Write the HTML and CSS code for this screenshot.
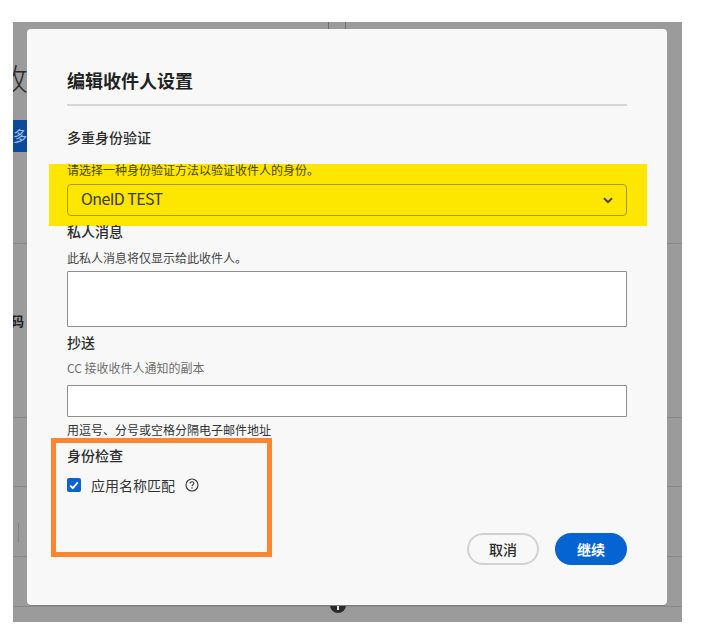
FILE: index.html
```html
<!DOCTYPE html>
<html lang="zh-CN">
<head>
  <meta charset="UTF-8">
  <title>编辑收件人设置</title>
  <link rel="stylesheet" href="styles.css">
</head>
<body>
  <div class="backdrop">
    <!-- Page behind the dialog, only its edges show -->
    <div class="behind">
      <div class="behind-row row-head">
        <div class="head-ticks"><i></i><i></i></div>
        <span class="behind-title">收</span>
        <span class="behind-btn">多</span>
      </div>
      <div class="behind-row row-code"><span class="behind-label">码</span></div>
      <div class="behind-row row-a"></div>
      <div class="behind-row row-b"><i class="behind-tick"></i></div>
      <div class="behind-row row-c"></div>
    </div>
    <span class="behind-plus"></span>

    <!-- Dialog -->
    <div class="dialog">
      <h1 class="dialog-title">编辑收件人设置</h1>

      <h2 class="label label-auth">多重身份验证</h2>
      <div class="highlight">
        <p class="hint">请选择一种身份验证方法以验证收件人的身份。</p>
        <div class="select">
          <span>OneID TEST</span>
          <svg width="10" height="7" viewBox="0 0 10 7"><path d="M1 1.2 5 5.2 9 1.2" fill="none" stroke="#4a4300" stroke-width="2"/></svg>
        </div>
      </div>

      <h2 class="label label-msg">私人消息</h2>
      <p class="hint hint-msg">此私人消息将仅显示给此收件人。</p>
      <div class="field field-tall"></div>

      <h2 class="label label-cc">抄送</h2>
      <p class="hint hint-grey">CC 接收收件人通知的副本</p>
      <div class="field"></div>
      <p class="hint hint-under">用逗号、分号或空格分隔电子邮件地址</p>

      <div class="bottom">
        <div class="callout">
          <h2 class="label">身份检查</h2>
          <div class="check-row">
            <span class="checkbox">
              <svg width="10" height="9" viewBox="0 0 10 9"><path d="M1.2 4.6 3.8 7.2 8.8 1.4" fill="none" stroke="#fff" stroke-width="1.9"/></svg>
            </span>
            <span class="check-text">应用名称匹配</span>
            <svg class="help" width="14" height="14" viewBox="0 0 14 14">
              <circle cx="7" cy="7" r="6" fill="none" stroke="#333" stroke-width="1.1"/>
              <path d="M5.1 5.5C5.1 4.4 6 3.8 7 3.8 8.1 3.8 8.9 4.5 8.9 5.4 8.9 6.6 7 6.8 7 8.3" fill="none" stroke="#333" stroke-width="1.1"/>
              <circle cx="7" cy="10.1" r=".75" fill="#333"/>
            </svg>
          </div>
        </div>
        <div class="actions">
          <button class="btn btn-cancel">取消</button>
          <button class="btn btn-go">继续</button>
        </div>
      </div>
    </div>
  </div>
</body>
</html>
```

FILE: styles.css
```css
* {
  margin: 0;
  padding: 0;
  box-sizing: border-box;
}

body {
  width: 712px;
  height: 639px;
  background: #fff;
  font-family: "Noto Sans CJK SC", "Noto Sans", sans-serif;
  color: #2c2c2c;
  overflow: hidden;
}

/* Dimmed page */
.backdrop {
  position: relative;
  width: 669px;
  height: 600px;
  margin: 22px 0 0 13px;
  background: #9b9b9b;
  overflow: hidden;
}

.behind-row {
  position: relative;
  border-bottom: 1px solid #8a8a8a;
}

.row-head { height: 222px; }
.row-code { height: 174px; }
.row-a { height: 69px; }
.row-b { height: 70px; }
.row-c { height: 50px; }

.head-ticks {
  display: flex;
  gap: 16px;
  padding-left: 315px;
  height: 7px;
}

.head-ticks i {
  width: 1px;
  background: #6f6f6f;
}

/* Cut off on the left by the screenshot edge */
.behind-title {
  display: block;
  margin: 30px 0 0 -15px;
  font-size: 30px;
  line-height: 36px;
  color: #2a2a2a;
  font-weight: 300;
}

.behind-btn {
  display: block;
  margin-top: 25px;
  width: 14px;
  height: 32px;
  background: #0b4a9b;
  color: #a9c0e0;
  font-size: 14px;
  line-height: 30px;
  overflow: hidden;
  white-space: nowrap;
}

.behind-label {
  display: block;
  margin-left: -2px;
  padding-top: 68px;
  font-size: 13px;
  line-height: 18px;
  font-weight: 700;
  color: #222;
}

.behind-tick {
  position: absolute;
  left: 5px;
  top: 36px;
  width: 1px;
  height: 20px;
  background: #868686;
}

.behind-plus {
  position: absolute;
  left: 317px;
  top: 575px;
  width: 16px;
  height: 16px;
  border-radius: 50%;
  background: #2b2b2b;
}

.behind-plus::before {
  content: '';
  position: absolute;
  left: 7px;
  top: 3px;
  width: 2px;
  height: 10px;
  background: #e6e6e6;
}

.behind-plus::after {
  content: '';
  position: absolute;
  left: 3px;
  top: 7px;
  width: 10px;
  height: 2px;
  background: #e6e6e6;
}

/* Dialog */
.dialog {
  position: absolute;
  left: 14px;
  top: 7px;
  width: 640px;
  height: 576px;
  padding: 39px 40px 0 40px;
  background: #f8f8f8;
  border-radius: 4px;
  box-shadow: 0 1px 0 #7f7f7f;
}

.dialog-title {
  font-size: 18px;
  line-height: 24px;
  font-weight: 700;
  color: #222;
  padding-bottom: 12px;
  border-bottom: 2px solid #d5d5d5;
}

.label {
  font-size: 14px;
  line-height: 16px;
  padding-bottom: 2px;
  font-weight: 500;
  color: #2c2c2c;
}

.label-auth { margin-top: 23px; }
.label-msg { margin-top: -3px; }
.label-cc { margin-top: 7px; }

.hint {
  font-size: 12px;
  line-height: 16px;
  color: #444;
}

.hint-msg { margin-top: 9px; }
.hint-grey { margin-top: 8px; color: #6e6e6e; }
.hint-under { margin-top: 5px; color: #333; }

/* Yellow marker over the first field */
.highlight {
  margin: 17px -20px 0 -18px;
  padding: 0 20px 10px 18px;
  height: 62px;
  background: #fde600;
}

.highlight .hint {
  line-height: 12px;
  color: #4a4500;
}

.select {
  display: flex;
  align-items: center;
  justify-content: space-between;
  height: 32px;
  margin-top: 8px;
  padding: 0 13px 0 13px;
  border: 1px solid #a89800;
  border-radius: 4px;
  font-size: 16px;
  color: #3f3a00;
}

.select span {
  margin-bottom: 5px;
  letter-spacing: -0.6px;
}

.field {
  height: 32px;
  margin-top: 9px;
  background: #fff;
  border: 1px solid #8e8e8e;
  border-radius: 1px;
}

.field-tall {
  height: 56px;
  margin-top: 5px;
}

.bottom {
  display: flex;
  justify-content: space-between;
  align-items: flex-end;
}

/* Orange marker round the identity check */
.callout {
  width: 221px;
  height: 119px;
  margin: 0 0 0 -16px;
  padding: 4px 0 0 11px;
  border: 5px solid #ff8530;
}

.check-row {
  display: flex;
  align-items: center;
  margin-top: 11px;
}

.checkbox {
  display: flex;
  align-items: center;
  justify-content: center;
  width: 14px;
  height: 14px;
  border-radius: 2px;
  background: #0a62d0;
}

.check-text {
  margin-left: 10px;
  font-size: 14px;
  line-height: 18px;
  color: #333;
}

.help { margin-left: 10px; }

.actions {
  display: flex;
  gap: 16px;
  margin-bottom: -8px;
}

.btn {
  width: 72px;
  height: 32px;
  border-radius: 16px;
  font-family: inherit;
  font-size: 14px;
  font-weight: 700;
}

.btn-cancel {
  background: transparent;
  border: 2px solid #d2d2d2;
  color: #2c2c2c;
  font-weight: 500;
}

.btn-go {
  background: #0564d2;
  border: none;
  color: #fff;
}
```
